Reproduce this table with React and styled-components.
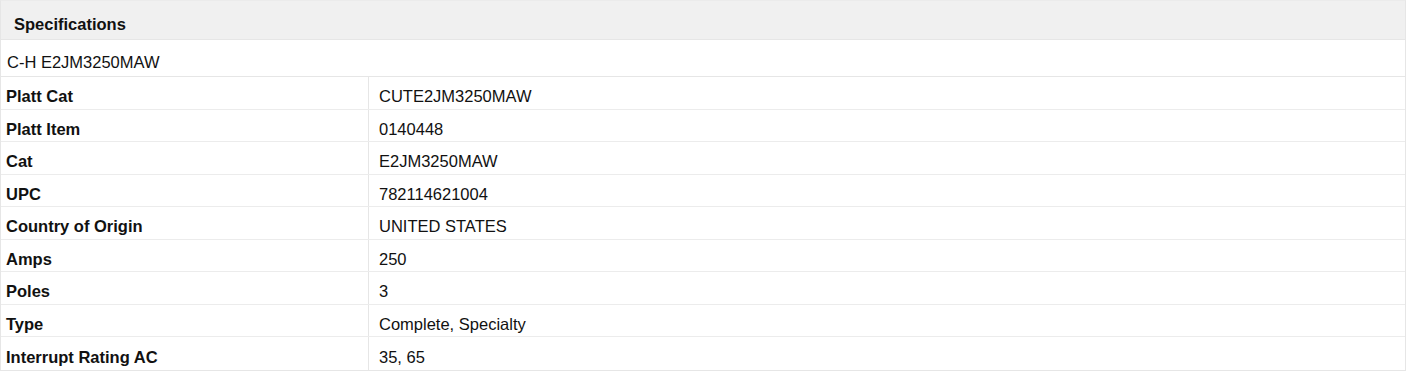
import React from 'react';
import styled, { createGlobalStyle } from 'styled-components';

const GlobalStyle = createGlobalStyle`
  body {
    margin: 0;
    background: #ffffff;
    font-family: "Liberation Sans", Arial, sans-serif;
    color: #111111;
  }
`;

const SpecTable = styled.div`
  width: 1406px;
  box-sizing: border-box;
  border: 1px solid #e6e6e6;
  border-top-color: #ebebeb;
  font-size: 16.5px;
`;

const TitleBar = styled.div`
  height: 39px;
  box-sizing: border-box;
  display: flex;
  align-items: center;
  padding: 9px 0 0 13px;
  background: #f0f0f0;
  border-bottom: 1px solid #e6e6e6;
  font-weight: bold;
`;

const ModelRow = styled.div`
  height: 37px;
  box-sizing: border-box;
  display: flex;
  align-items: center;
  padding: 8px 0 0 6px;
  border-bottom: 1px solid #e6e6e6;
`;

const Row = styled.div`
  display: grid;
  grid-template-columns: 368px 1fr;
  height: 32.5px;
  box-sizing: border-box;
  border-bottom: ${(p) => (p.$last ? 'none' : '1px solid #ececec')};
`;

const Label = styled.div`
  display: flex;
  align-items: center;
  padding: 8px 0 0 5px;
  font-weight: bold;
  border-right: 1px solid #e6e6e6;
`;

const Value = styled.div`
  display: flex;
  align-items: center;
  padding: 8px 0 0 10px;
`;

const specs = [
  ['Platt Cat', 'CUTE2JM3250MAW'],
  ['Platt Item', '0140448'],
  ['Cat', 'E2JM3250MAW'],
  ['UPC', '782114621004'],
  ['Country of Origin', 'UNITED STATES'],
  ['Amps', '250'],
  ['Poles', '3'],
  ['Type', 'Complete, Specialty'],
  ['Interrupt Rating AC', '35, 65'],
];

const App = () => (
  <>
    <GlobalStyle />
    <SpecTable>
      <TitleBar>Specifications</TitleBar>
      <ModelRow>C-H E2JM3250MAW</ModelRow>
      {specs.map(([label, value], i) => (
        <Row key={label} $last={i === specs.length - 1}>
          <Label>{label}</Label>
          <Value>{value}</Value>
        </Row>
      ))}
    </SpecTable>
  </>
);

export default App;
